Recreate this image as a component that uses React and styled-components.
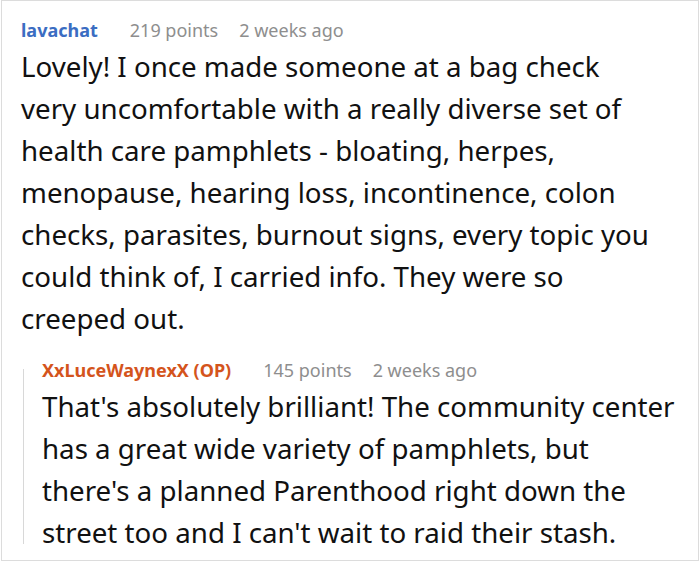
import React from "react";
import styled, { createGlobalStyle } from "styled-components";

const GlobalStyle = createGlobalStyle`
  html, body {
    margin: 0;
    padding: 0;
    background: #ffffff;
  }
  body {
    font-family: "Noto Sans", "Open Sans", sans-serif;
  }
`;

const Card = styled.div`
  box-sizing: border-box;
  width: 698px;
  height: 561px;
  margin-left: 1px;
  border: 1px solid #dcdcdc;
  padding: 17px 12px 0 19px;
  background: #fff;
`;

const Meta = styled.div`
  display: flex;
  align-items: baseline;
  font-size: 18px;
  line-height: 24px;
  margin-bottom: 3px;
`;

const Author = styled.span`
  font-weight: 700;
  color: ${({ $op }) => ($op ? "#d4541c" : "#3b6dc2")};
  margin-right: 32px;
`;

const Info = styled.span`
  color: #8e8e8e;
  margin-right: 21px;
`;

const Body = styled.p`
  margin: 0;
  max-width: ${({ $width }) => $width}px;
  font-size: 27.7px;
  line-height: 42px;
  color: #111;
`;

const Reply = styled.div`
  position: relative;
  margin-top: 19px;
  padding-left: 21px;

  &::before {
    content: "";
    position: absolute;
    left: 2px;
    top: 11px;
    bottom: 9px;
    width: 1px;
    background: #d8d8d8;
  }
`;

const Comment = ({ author, op, points, time, width, children }) => (
  <>
    <Meta>
      <Author $op={op}>{author}</Author>
      <Info>{points} points</Info>
      <Info>{time}</Info>
    </Meta>
    <Body $width={width}>{children}</Body>
  </>
);

export default function App() {
  return (
    <>
      <GlobalStyle />
      <Card>
        <Comment author="lavachat" points={219} time="2 weeks ago" width={636}>
          Lovely! I once made someone at a bag check very uncomfortable with a
          really diverse set of health care pamphlets - bloating, herpes,
          menopause, hearing loss, incontinence, colon checks, parasites,
          burnout signs, every topic you could think of, I carried info. They
          were so creeped out.
        </Comment>
        <Reply>
          <Comment
            author="XxLuceWaynexX (OP)"
            op
            points={145}
            time="2 weeks ago"
            width={634}
          >
            That's absolutely brilliant! The community center has a great wide
            variety of pamphlets, but there's a planned Parenthood right down
            the street too and I can't wait to raid their stash.
          </Comment>
        </Reply>
      </Card>
    </>
  );
}
